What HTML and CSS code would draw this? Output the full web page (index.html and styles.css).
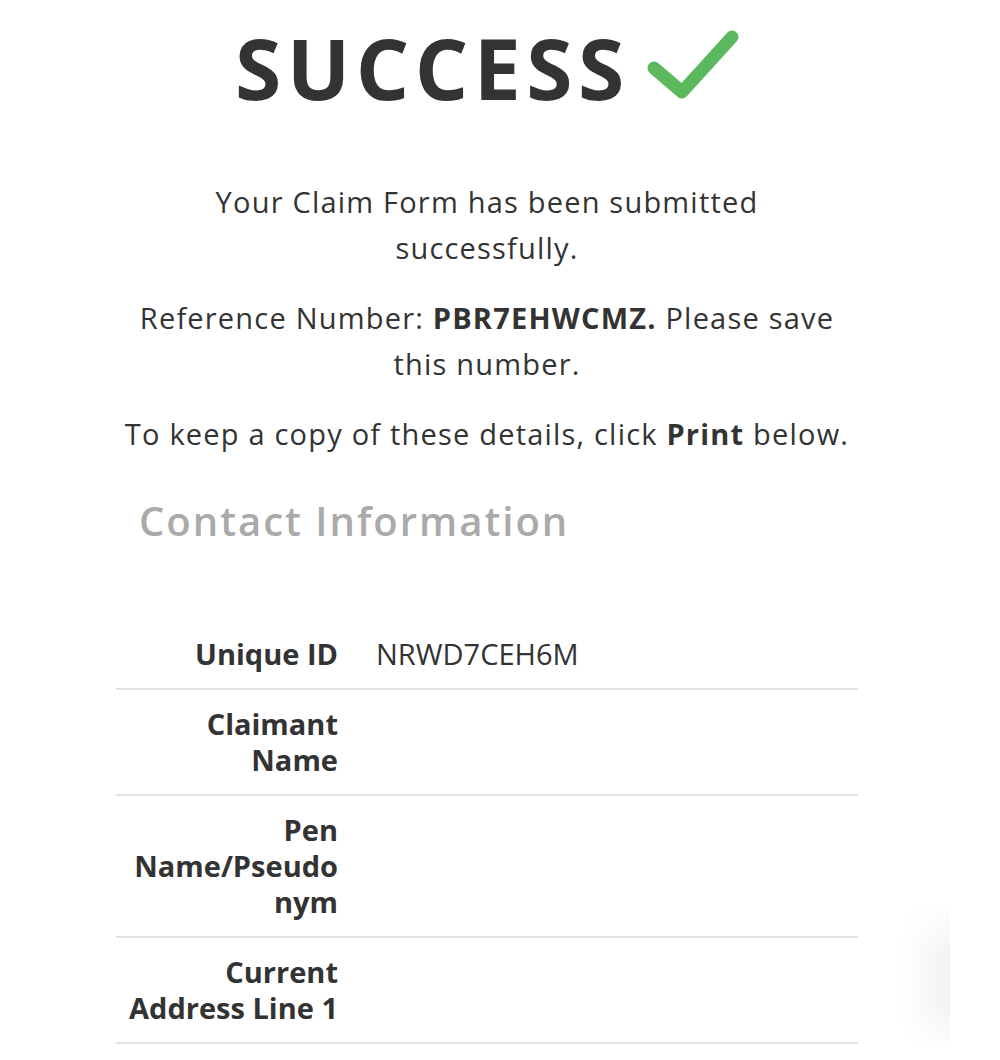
FILE: index.html
```html
<!DOCTYPE html>
<html>
<head>
<meta charset="utf-8">
<link rel="stylesheet" href="styles.css">
</head>
<body>
<div class="page">
  <div class="panel">
    <h1 class="title"><span class="title-text">SUCCESS</span><svg class="check" viewBox="0 0 100 76" width="100" height="76"><polyline points="10,42 38,66 88,11" fill="none" stroke="#5cb85c" stroke-width="13" stroke-linecap="round" stroke-linejoin="round"/></svg></h1>
    <p class="msg">Your Claim Form has been submitted successfully.</p>
    <p class="msg">Reference Number: <strong>PBR7EHWCMZ.</strong> Please save this number.</p>
    <p class="msg">To keep a copy of these details, click <strong>Print</strong> below.</p>
    <h2 class="section">Contact Information</h2>
    <table class="info">
      <tr><th>Unique ID</th><td>NRWD7CEH6M</td></tr>
      <tr><th>Claimant Name</th><td></td></tr>
      <tr><th>Pen Name/Pseudo<wbr>nym</th><td></td></tr>
      <tr><th>Current Address Line 1</th><td></td></tr>
    </table>
  </div>
  <div class="edge-shadow"></div>
</div>
</body>
</html>
```
FILE: styles.css
```css
html, body {
  margin: 0;
  padding: 0;
  background: #ffffff;
}
body {
  font-family: "Open Sans", "Liberation Sans", sans-serif;
  color: #333333;
}
.page {
  position: relative;
  padding-left: 116px;
  height: 1060px;
  overflow: hidden;
}
.panel {
  width: 742px;
}
.title {
  margin: 0;
  padding: 18px 0 0 119px;
  display: flex;
  align-items: center;
  gap: 14px;
  font-size: 84px;
  font-weight: 700;
  letter-spacing: 5.5px;
  line-height: 100px;
  color: #333333;
}
.check {
  display: block;
  margin-top: -8px;
}
.msg {
  margin: 0 0 24px 0;
  padding: 0 7px;
  text-align: center;
  font-size: 29px;
  line-height: 46px;
  letter-spacing: 1.2px;
  word-spacing: 0;
  font-weight: 400;
  color: #333333;
}
.title + .msg {
  margin-top: 61px;
}
.msg strong {
  font-weight: 700;
}
.section {
  margin: 38px 0 0 23px;
  font-size: 40px;
  font-weight: 600;
  letter-spacing: 2px;
  line-height: 52px;
  color: #aaaaaa;
}
.info {
  margin-top: 73px;
  width: 742px;
  border-collapse: collapse;
}
.info tr {
  border-bottom: 2px solid #e2e2e2;
}
.info th {
  width: 222px;
  text-align: right;
  vertical-align: top;
  padding: 16px 2px 16px 0;
  font-size: 29px;
  line-height: 36px;
  font-weight: 700;
  color: #333333;
}
.info td {
  vertical-align: top;
  padding: 16px 0 16px 36px;
  font-size: 29px;
  line-height: 36px;
  font-weight: 400;
  color: #333333;
}
.edge-shadow {
  position: absolute;
  left: 900px;
  top: 900px;
  width: 50px;
  height: 150px;
  background: linear-gradient(to right, rgba(0,0,0,0) 0%, rgba(0,0,0,0.05) 100%);
  -webkit-mask-image: linear-gradient(to bottom, transparent 0%, #000 40%, #000 70%, transparent 100%);
  mask-image: linear-gradient(to bottom, transparent 0%, #000 40%, #000 70%, transparent 100%);
}
```
